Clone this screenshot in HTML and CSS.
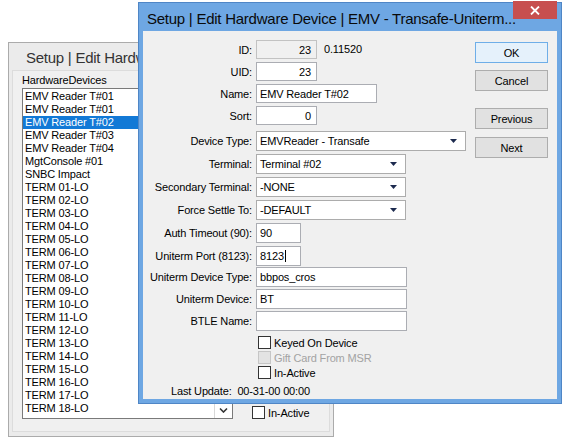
FILE: index.html
```html
<!DOCTYPE html>
<html>
<head>
<meta charset="utf-8">
<link rel="stylesheet" href="styles.css">
</head>
<body>
<div class="desk">
  <div class="win back">
    <div class="titlebar">Setup | Edit Hardware Devices</div>
    <div class="client">
      <div class="cap">HardwareDevices</div>
      <div class="listrow">
        <div class="listbox">
          <div class="items">
            <div class="it">EMV Reader T#01</div>
            <div class="it">EMV Reader T#01</div>
            <div class="it sel">EMV Reader T#02</div>
            <div class="it">EMV Reader T#03</div>
            <div class="it">EMV Reader T#04</div>
            <div class="it">MgtConsole #01</div>
            <div class="it">SNBC Impact</div>
            <div class="it">TERM 01-LO</div>
            <div class="it">TERM 02-LO</div>
            <div class="it">TERM 03-LO</div>
            <div class="it">TERM 04-LO</div>
            <div class="it">TERM 05-LO</div>
            <div class="it">TERM 06-LO</div>
            <div class="it">TERM 07-LO</div>
            <div class="it">TERM 08-LO</div>
            <div class="it">TERM 09-LO</div>
            <div class="it">TERM 10-LO</div>
            <div class="it">TERM 11-LO</div>
            <div class="it">TERM 12-LO</div>
            <div class="it">TERM 13-LO</div>
            <div class="it">TERM 14-LO</div>
            <div class="it">TERM 15-LO</div>
            <div class="it">TERM 16-LO</div>
            <div class="it">TERM 17-LO</div>
            <div class="it">TERM 18-LO</div>
          </div>
          <div class="vscroll">
            <div class="sbtn"><svg width="9" height="6" viewBox="0 0 9 6"><path d="M1 4.5 L4.5 1 L8 4.5" fill="none" stroke="#333" stroke-width="1.6"/></svg></div>
            <div class="track"></div>
            <div class="sbtn"><svg width="9" height="6" viewBox="0 0 9 6"><path d="M1 1.5 L4.5 5 L8 1.5" fill="none" stroke="#333" stroke-width="1.6"/></svg></div>
          </div>
        </div>
        <div class="side">
          <div class="chk"><span class="box"></span><span>In-Active</span></div>
        </div>
      </div>
    </div>
  </div>

  <div class="win front">
    <div class="titlebar">
      <div class="close"><svg width="10" height="9" viewBox="0 0 10 9"><path d="M1 0.5 L9 8.5 M9 0.5 L1 8.5" stroke="#fff" stroke-width="1.8"/></svg></div>
      <span class="ttl">Setup | Edit Hardware Device | EMV - Transafe-Uniterm...</span>
    </div>
    <div class="client">
      <div class="form">
        <div class="grp g1">
          <div class="frow"><div class="l">ID:</div><div class="tb num dis w60">23</div><div class="ver">0.11520</div></div>
          <div class="frow"><div class="l">UID:</div><div class="tb num w60">23</div></div>
          <div class="frow"><div class="l">Name:</div><div class="tb w120">EMV Reader T#02</div></div>
          <div class="frow"><div class="l">Sort:</div><div class="tb num w60">0</div></div>
        </div>
        <div class="grp g2">
          <div class="frow"><div class="l">Device Type:</div><div class="tb cb w209"><span>EMVReader - Transafe</span><svg class="dd" width="7" height="4" viewBox="0 0 7 4"><path d="M0 0 H7 L3.5 4 Z" fill="#1c2a4e"/></svg></div></div>
          <div class="frow"><div class="l">Terminal:</div><div class="tb cb w149"><span>Terminal #02</span><svg class="dd" width="7" height="4" viewBox="0 0 7 4"><path d="M0 0 H7 L3.5 4 Z" fill="#1c2a4e"/></svg></div></div>
          <div class="frow"><div class="l">Secondary Terminal:</div><div class="tb cb w149"><span>-NONE</span><svg class="dd" width="7" height="4" viewBox="0 0 7 4"><path d="M0 0 H7 L3.5 4 Z" fill="#1c2a4e"/></svg></div></div>
          <div class="frow"><div class="l">Force Settle To:</div><div class="tb cb w149"><span>-DEFAULT</span><svg class="dd" width="7" height="4" viewBox="0 0 7 4"><path d="M0 0 H7 L3.5 4 Z" fill="#1c2a4e"/></svg></div></div>
          <div class="frow"><div class="l">Auth Timeout (90):</div><div class="tb w44">90</div></div>
          <div class="frow"><div class="l">Uniterm Port (8123):</div><div class="tb w44">8123<span class="caret"></span></div></div>
        </div>
        <div class="grp g3">
          <div class="frow"><div class="l">Uniterm Device Type:</div><div class="tb w150">bbpos_cros</div></div>
          <div class="frow"><div class="l">Uniterm Device:</div><div class="tb w150">BT</div></div>
          <div class="frow"><div class="l">BTLE Name:</div><div class="tb w150"></div></div>
        </div>
        <div class="checks">
          <div class="chk"><span class="box"></span><span>Keyed On Device</span></div>
          <div class="chk disabled"><span class="box"></span><span>Gift Card From MSR</span></div>
          <div class="chk"><span class="box"></span><span>In-Active</span></div>
        </div>
        <div class="upd">Last Update:&nbsp; 00-31-00 00:00</div>
      </div>
      <div class="buttons">
        <div class="btn def">OK</div>
        <div class="btn b-cancel">Cancel</div>
        <div class="btn b-prev">Previous</div>
        <div class="btn b-next">Next</div>
      </div>
    </div>
  </div>
</div>
</body>
</html>
```

FILE: styles.css
```css
html, body {
  margin: 0;
  padding: 0;
  background: #ffffff;
}
.desk {
  position: relative;
  width: 565px;
  height: 439px;
  overflow: hidden;
  font-family: "Liberation Sans", Arial, sans-serif;
  font-size: 11px;
  letter-spacing: -0.15px;
  color: #000;
}
.win {
  position: absolute;
  box-sizing: border-box;
  display: flex;
  flex-direction: column;
}
.titlebar {
  flex: none;
  display: flex;
  align-items: center;
  font-family: "Liberation Sans", Arial, sans-serif;
  font-size: 15px;
  letter-spacing: -0.25px;
  white-space: nowrap;
}

/* back window */
.back {
  left: 8px;
  top: 42px;
  width: 326px;
  height: 395px;
  background: #ebebeb;
  border: 1px solid #ababab;
  padding: 0 3px 4px 3px;
}
.back .titlebar {
  height: 27px;
  padding: 2px 0 0 14px;
  box-sizing: border-box;
  color: #333;
  overflow: hidden;
}
.back .client {
  flex: 1;
  background: #f0f0f0;
  border: 1px solid #dcdcdc;
  padding: 3px 0 0 9px;
}
.cap {
  height: 13px;
  line-height: 13px;
  margin-bottom: 1px;
}
.listrow {
  display: flex;
}
.listbox {
  width: 211px;
  height: 331px;
  box-sizing: border-box;
  border: 1px solid #7a7a7a;
  background: #fff;
  display: flex;
}
.items {
  flex: 1;
  padding-top: 1px;
}
.it {
  height: 13px;
  line-height: 13px;
  padding-left: 2px;
  white-space: nowrap;
}
.it.sel {
  background: #1279d6;
  color: #fff;
}
.vscroll {
  width: 17px;
  display: flex;
  flex-direction: column;
  background: #f0f0f0;
  border-left: 1px solid #d8d8d8;
}
.vscroll .track {
  flex: 1;
}
.sbtn {
  height: 17px;
  display: flex;
  align-items: center;
  justify-content: center;
  background: #fff;
}
.side {
  align-self: flex-end;
  margin-left: 19px;
}
.chk {
  display: flex;
  align-items: center;
  height: 13px;
}
.box {
  width: 13px;
  height: 13px;
  box-sizing: border-box;
  border: 1px solid #333;
  background: #fff;
  margin-right: 3px;
  flex: none;
}
.chk.disabled {
  color: #a3a3a3;
}
.chk.disabled .box {
  background: #e3e3e3;
  border-color: #c6c6c6;
}

/* front window */
.front {
  left: 138px;
  top: 2px;
  width: 424px;
  height: 402px;
  background: #6ea7e3;
  border: 1px solid #4f86c6;
  padding: 0 4px 4px 4px;
}
.front .titlebar {
  height: 28px;
  padding: 3px 0 0 4px;
  box-sizing: border-box;
  color: #0a0a0a;
  position: relative;
}
.ttl {
  position: relative;
}
.close {
  position: absolute;
  right: 0;
  top: -2px;
  width: 44px;
  height: 18px;
  background: #c74f4f;
  display: flex;
  align-items: center;
  justify-content: center;
}
.front .client {
  flex: 1;
  background: #f0f0f0;
  display: flex;
}
.form {
  width: 332px;
  padding-top: 9px;
  display: flex;
  flex-direction: column;
}
.grp {
  display: flex;
  flex-direction: column;
}
.g1 { gap: 3px; }
.g1 .frow { height: 19px; }
.g2 { gap: 3px; margin-top: 6px; }
.g2 .frow { height: 20px; }
.g3 { gap: 2px; margin-top: 1px; }
.g3 .frow { height: 20px; }
.frow {
  display: flex;
  align-items: center;
}
.l {
  width: 113px;
  box-sizing: border-box;
  padding-right: 4px;
  text-align: right;
  white-space: nowrap;
}
.tb {
  box-sizing: border-box;
  height: 100%;
  border: 1px solid #abadb3;
  background: #fff;
  padding: 0 3px;
  display: flex;
  align-items: center;
  white-space: nowrap;
}
.tb.num {
  justify-content: flex-end;
  padding-right: 5px;
}
.tb.dis {
  background: #f0f0f0;
  border-color: #c2c2c2;
}
.tb.cb {
  border-color: #acacac;
}
.dd {
  margin-left: auto;
  margin-right: 5px;
}
.caret {
  display: inline-block;
  width: 1px;
  height: 12px;
  background: #000;
  margin-left: 1px;
}
.w60 { width: 61px; }
.w120 { width: 121px; }
.w209 { width: 210px; }
.w149 { width: 150px; }
.w44 { width: 45px; }
.w150 { width: 151px; }
.ver {
  margin-left: 7px;
  margin-top: -2px;
}
.checks {
  margin-top: 4px;
  padding-left: 115px;
  display: flex;
  flex-direction: column;
}
.checks .chk {
  height: 15px;
}
.checks .box {
  margin-right: 3px;
}
.upd {
  margin-top: 4px;
  padding-left: 28px;
  height: 14px;
  line-height: 14px;
}
.buttons {
  padding-top: 11px;
  display: flex;
  flex-direction: column;
}
.btn {
  width: 73px;
  height: 21px;
  box-sizing: border-box;
  border: 1px solid #adadad;
  background: #e1e1e1;
  display: flex;
  align-items: center;
  justify-content: center;
}
.btn.def {
  background: #e5f1fb;
  border-color: #6eaee8;
}
.b-cancel { margin-top: 7px; }
.b-prev { margin-top: 17px; }
.b-next { margin-top: 8px; }
```
